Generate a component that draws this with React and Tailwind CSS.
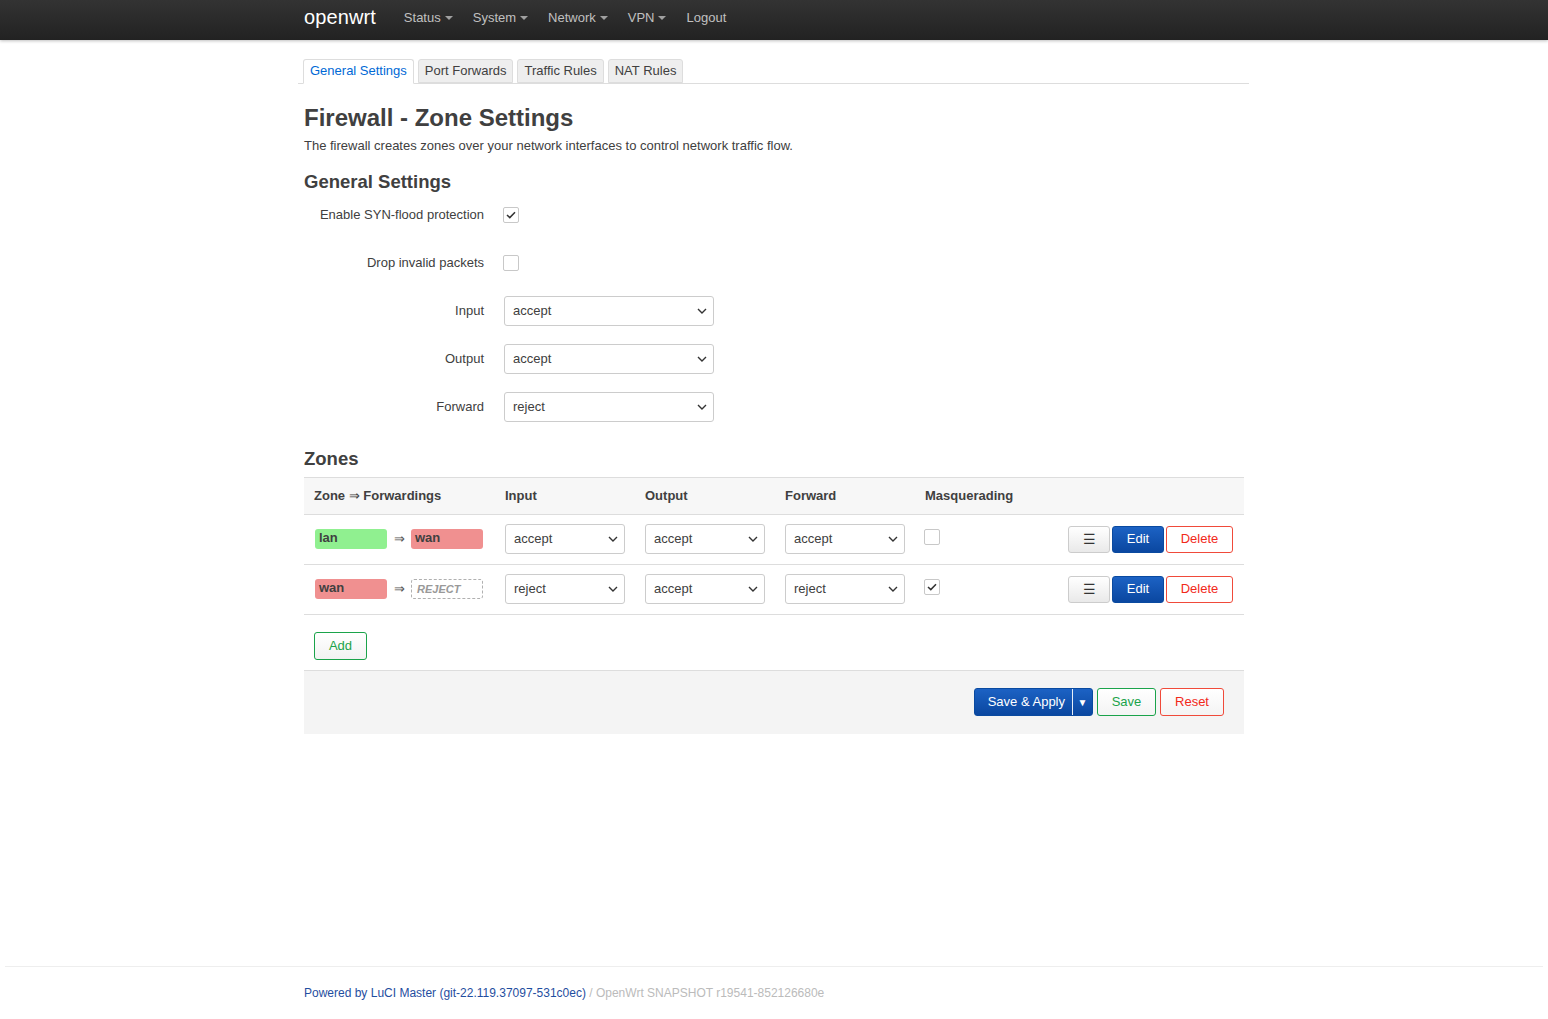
import React from "react";

const Caret = () => (
  <span className="inline-block ml-[4px] align-middle w-0 h-0 border-l-[4px] border-r-[4px] border-t-[4px] border-l-transparent border-r-transparent border-t-[#a0a0a0] mt-[-2px]" />
);

const Chevron = () => (
  <svg width="10" height="6" viewBox="0 0 10 6" className="absolute right-[6px] top-1/2 -translate-y-1/2">
    <path d="M1 1 L5 5 L9 1" fill="none" stroke="#333" strokeWidth="1.4" />
  </svg>
);

const Select = ({ value, w = "w-[210px]" }) => (
  <div className={`relative ${w} h-[30px] border border-[#cccccc] rounded-[3px] bg-white flex items-center pl-[8px] text-[13px] text-[#404040]`}>
    {value}
    <Chevron />
  </div>
);

const Checkbox = ({ checked }) => (
  <div className="w-[16px] h-[16px] border border-[#c8c8c8] rounded-[2px] bg-white flex items-center justify-center">
    {checked && (
      <svg width="10" height="8" viewBox="0 0 10 8">
        <path d="M1 4 L3.8 6.6 L9 1.2" fill="none" stroke="#333" strokeWidth="1.5" />
      </svg>
    )}
  </div>
);

const FormRow = ({ label, children, ml = "ml-[19px]" }) => (
  <div className="flex items-center h-[48px]">
    <div className="w-[180px] text-right text-[13px] text-[#404040]">{label}</div>
    <div className={ml}>{children}</div>
  </div>
);

const Badge = ({ color, children }) => (
  <div className={`w-[72px] h-[20px] rounded-[3px] ${color} text-[13px] font-bold text-[#404040] pl-[4px] leading-[18px]`}>{children}</div>
);

const ZoneRow = ({ from, fromColor, to, toColor, input, output, forward, masq }) => (
  <div className="flex items-center h-[50px] border-b border-[#dddddd]">
    <div className="w-[191px] pl-[11px] flex items-center">
      <Badge color={fromColor}>{from}</Badge>
      <span className="text-[13px] text-[#555] ml-[7px] mr-[6px]">⇒</span>
      {to ? (
        <Badge color={toColor}>{to}</Badge>
      ) : (
        <div className="w-[72px] h-[20px] rounded-[3px] border border-dashed border-[#b0b0b0] text-[11px] italic font-bold text-[#999] pl-[5px] leading-[19px]">REJECT</div>
      )}
    </div>
    <div className="w-[140px] pl-[10px]"><Select value={input} w="w-[120px]" /></div>
    <div className="w-[140px] pl-[10px]"><Select value={output} w="w-[120px]" /></div>
    <div className="w-[140px] pl-[10px]"><Select value={forward} w="w-[120px]" /></div>
    <div className="w-[140px] pl-[9px] -mt-[4px]"><Checkbox checked={masq} /></div>
    <div className="flex-1 flex justify-end pr-[11px] gap-[2px]">
      <div className="w-[42px] h-[27px] rounded-[3px] border border-[#cccccc] bg-gradient-to-b from-white to-[#e9e9e9] flex items-center justify-center text-[14px] text-[#333]">☰</div>
      <div className="w-[52px] h-[27px] rounded-[3px] border border-[#0a4aa0] bg-gradient-to-b from-[#1c62c4] to-[#0a47a0] flex items-center justify-center text-[13px] text-white">Edit</div>
      <div className="w-[67px] h-[27px] rounded-[3px] border border-[#f04a3a] bg-white flex items-center justify-center text-[13px] text-[#f2291a]">Delete</div>
    </div>
  </div>
);

export default function App() {
  return (
    <div className="min-h-[1019px] bg-white flex flex-col" style={{ fontFamily: '"Liberation Sans", Arial, sans-serif' }}>
      {/* Navbar */}
      <div className="h-[40px] bg-gradient-to-b from-[#333333] to-[#222222] shadow-[0_1px_3px_rgba(0,0,0,0.25)]">
        <div className="w-[940px] mx-auto flex items-center h-[40px]">
          <span className="text-[20px] text-white mr-[28px] -mt-[6px] tracking-[0.1px]">openwrt</span>
          <nav className="flex items-center text-[13px] text-[#c0c0c0] gap-[20px] -mt-[4px]">
            <span>Status<Caret /></span>
            <span>System<Caret /></span>
            <span>Network<Caret /></span>
            <span>VPN<Caret /></span>
            <span>Logout</span>
          </nav>
        </div>
      </div>

      <div className="w-[940px] mx-auto flex-1">
        {/* Tabs */}
        <div className="mt-[19px] border-b border-[#dddddd] flex -ml-[6px] -mr-[5px] pl-[5px] h-[25px]">
          <div className="h-[25px] px-[6px] border border-[#dddddd] border-b-white rounded-t-[3px] bg-white text-[13px] text-[#0069d6] leading-[22px] mr-[4px]">General Settings</div>
          <div className="h-[24px] px-[6px] border border-[#dddddd] rounded-t-[3px] bg-[#eeeeee] text-[13px] text-[#404040] leading-[22px] mr-[4px]">Port Forwards</div>
          <div className="h-[24px] px-[6px] border border-[#dddddd] rounded-t-[3px] bg-[#eeeeee] text-[13px] text-[#404040] leading-[22px] mr-[4px]">Traffic Rules</div>
          <div className="h-[24px] px-[6px] border border-[#dddddd] rounded-t-[3px] bg-[#eeeeee] text-[13px] text-[#404040] leading-[22px]">NAT Rules</div>
        </div>

        <h2 className="mt-[19px] text-[24px] font-bold text-[#404040] leading-[30px]">Firewall - Zone Settings</h2>
        <p className="mt-[3px] text-[13px] text-[#404040]">The firewall creates zones over your network interfaces to control network traffic flow.</p>

        <h3 className="mt-[14px] text-[18.5px] font-bold text-[#404040] leading-[24px]">General Settings</h3>
        <div className="-mt-[3px]">
          <FormRow label="Enable SYN-flood protection"><Checkbox checked /></FormRow>
          <FormRow label="Drop invalid packets"><Checkbox /></FormRow>
          <FormRow label="Input" ml="ml-[20px]"><Select value="accept" /></FormRow>
          <FormRow label="Output" ml="ml-[20px]"><Select value="accept" /></FormRow>
          <FormRow label="Forward" ml="ml-[20px]"><Select value="reject" /></FormRow>
        </div>

        <h3 className="mt-[16px] text-[18.5px] font-bold text-[#404040] leading-[24px]">Zones</h3>
        <div className="mt-[6px] border-t border-[#dddddd]">
          <div className="flex items-center h-[37px] bg-[#f7f7f7] border-b border-[#dddddd] text-[13px] font-bold text-[#404040]">
            <div className="w-[191px] pl-[10px]">Zone <span className="font-normal">⇒</span> Forwardings</div>
            <div className="w-[140px] pl-[10px]">Input</div>
            <div className="w-[140px] pl-[10px]">Output</div>
            <div className="w-[140px] pl-[10px]">Forward</div>
            <div className="w-[140px] pl-[10px]">Masquerading</div>
          </div>
          <ZoneRow from="lan" fromColor="bg-[#90f090]" to="wan" toColor="bg-[#f09090]" input="accept" output="accept" forward="accept" masq={false} />
          <ZoneRow from="wan" fromColor="bg-[#f09090]" input="reject" output="accept" forward="reject" masq />
        </div>

        <div className="pl-[10px] pt-[17px] pb-[10px]">
          <div className="w-[53px] h-[28px] rounded-[3px] border border-[#1aa34a] bg-gradient-to-b from-white to-[#f2f2f2] flex items-center justify-center text-[13px] text-[#1aa34a]">Add</div>
        </div>

        <div className="h-[64px] bg-[#f4f4f4] border-t border-[#dddddd] flex items-center justify-end pr-[20px] gap-[4px]">
          <div className="h-[28px] rounded-[3px] border border-[#0a4aa0] bg-gradient-to-b from-[#1c62c4] to-[#0a47a0] flex items-center text-[13px] text-white">
            <span className="pl-[13px] pr-[7px]">Save &amp; Apply</span>
            <span className="h-[26px] border-l border-white/90 w-[20px] justify-center flex items-center text-[10px]">▼</span>
          </div>
          <div className="w-[59px] h-[28px] rounded-[3px] border border-[#1aa34a] bg-gradient-to-b from-white to-[#f4f4f4] flex items-center justify-center text-[13px] text-[#1aa34a]">Save</div>
          <div className="w-[64px] h-[28px] rounded-[3px] border border-[#f04a3a] bg-gradient-to-b from-white to-[#f4f4f4] flex items-center justify-center text-[13px] text-[#f2291a]">Reset</div>
        </div>
      </div>

      <div className="mx-[5px] border-t border-[#eeeeee] mt-auto">
        <div className="w-[940px] mx-auto pt-[17px] pb-[17px] text-[12px]">
          <span className="text-[#1f4ea0]">Powered by LuCI Master (git-22.119.37097-531c0ec)</span>
          <span className="text-[#bbbbbb]"> / OpenWrt SNAPSHOT r19541-852126680e</span>
        </div>
      </div>
    </div>
  );
}
